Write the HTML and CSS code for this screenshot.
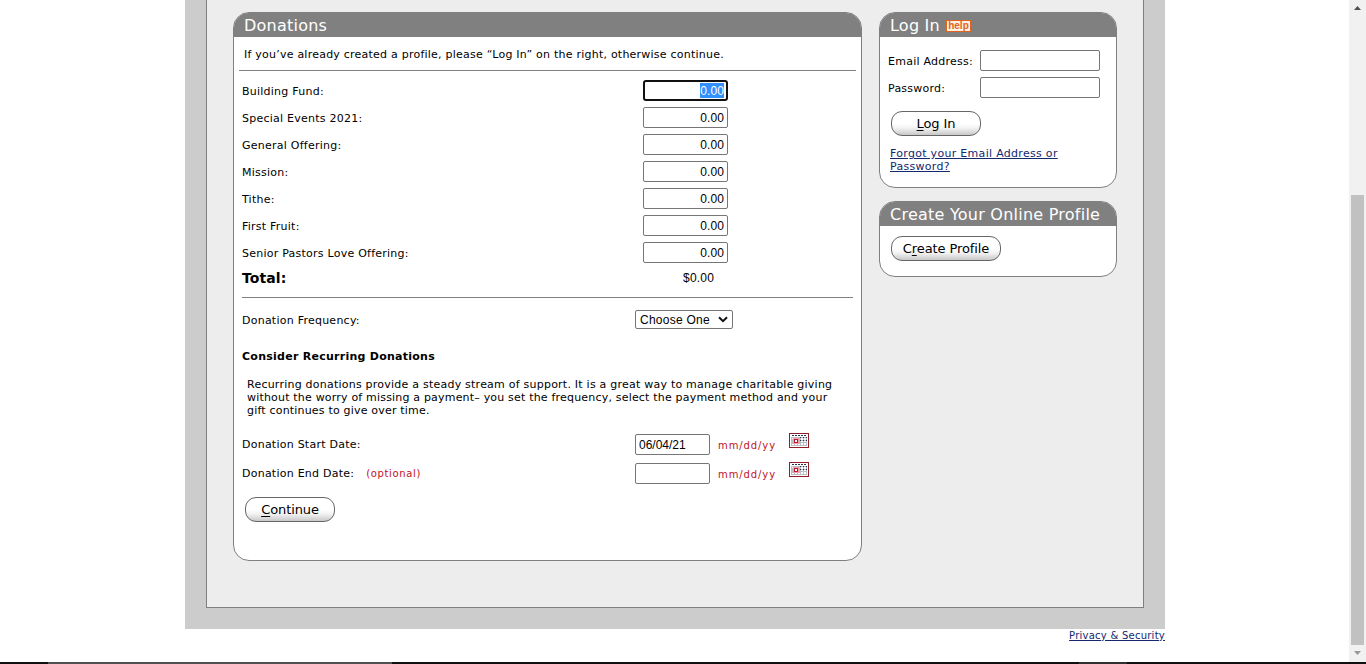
FILE: index.html
```html
<!DOCTYPE html>
<html lang="en">
<head>
<meta charset="utf-8">
<title>Donations</title>
<link rel="stylesheet" href="styles.css">
</head>
<body>
<div class="viewport">
  <div class="page">
    <div class="frame">
      <div class="content">
        <section class="card donations">
          <h2 class="card-title">Donations</h2>
          <p class="intro"><span>If you’ve already created a profile, please “Log In” on the right, otherwise continue.</span></p>
          <div class="funds">
            <div class="row"><label>Building Fund:</label><div class="field amount focused"><span class="selected">0.00</span></div></div>
            <div class="row"><label>Special Events 2021:</label><input class="field amount" value="0.00"></div>
            <div class="row"><label>General Offering:</label><input class="field amount" value="0.00"></div>
            <div class="row"><label>Mission:</label><input class="field amount" value="0.00"></div>
            <div class="row"><label>Tithe:</label><input class="field amount" value="0.00"></div>
            <div class="row"><label>First Fruit:</label><input class="field amount" value="0.00"></div>
            <div class="row"><label>Senior Pastors Love Offering:</label><input class="field amount" value="0.00"></div>
            <div class="row total"><strong>Total:</strong><span class="sum">$0.00</span></div>
          </div>
          <div class="row frequency"><label>Donation Frequency:</label>
            <div class="select"><span>Choose One</span><svg width="10" height="7" viewBox="0 0 10 7"><path d="M1 1.2 5 5.2 9 1.2" fill="none" stroke="#111" stroke-width="2"/></svg></div>
          </div>
          <h3 class="subhead"><span>Consider Recurring Donations</span></h3>
          <p class="blurb"><span>Recurring donations provide a steady stream of support. It is a great way to manage charitable giving</span><br><span class="tight">without the worry of missing a payment– you set the frequency, select the payment method and your</span><br><span class="tight">gift continues to give over time.</span></p>
          <div class="row date"><label>Donation Start Date:</label><input class="field day" value="06/04/21"><span class="hint">mm/dd/yy</span>
            <svg class="calendar" width="20" height="15" viewBox="0 0 20 15" shape-rendering="crispEdges"><use href="#cal"/></svg></div>
          <div class="row date"><label>Donation End Date:<span class="optional">(optional)</span></label><input class="field day"><span class="hint">mm/dd/yy</span>
            <svg class="calendar" width="20" height="15" viewBox="0 0 20 15" shape-rendering="crispEdges">
              <defs><g id="cal"><path fill="#921c28" d="M0 0h20v15H0z"/><path fill="#fff" d="M1 1h18v13H1z"/><path fill="#b9bdc4" d="M2 4h16v9H2z"/><path fill="#fff" d="M3 5h2v1H3zM12 5h2v2h-2zM15 5h2v2h-2zM12 8h2v1h-2zM15 8h2v1h-2zM12 10h2v2h-2zM15 10h2v2h-2zM3 11h2v1H3zM6 11h2v1H6zM9 11h2v1H9z"/><path fill="#26354f" d="M3 2h2v1H3zM6 2h2v1H6zM9 2h2v1H9zM12 2h2v1h-2zM15 2h2v1h-2zM11 4h1v1h-1zM14 4h1v1h-1zM17 4h1v1h-1zM11 7h1v1h-1zM14 7h1v1h-1zM17 7h1v1h-1z"/><path fill="#f3a0a8" d="M4 5h6v6H4z"/><path fill="#c4182a" d="M5 6h4v4H5z"/><path fill="#fff" d="M6 7h2v2H6z"/></g></defs>
              <use href="#cal"/></svg></div>
          <button class="pill continue"><span><u>C</u>ontinue</span></button>
        </section>
        <aside class="side">
          <section class="card login">
            <h2 class="card-title">Log In<span class="help">help</span></h2>
            <div class="cred"><label>Email Address:</label><input class="field"></div>
            <div class="cred"><label>Password:</label><input class="field"></div>
            <button class="pill enter"><span><u>L</u>og In</span></button>
            <a class="forgot">Forgot your Email Address or<br>Password?</a>
          </section>
          <section class="card profile">
            <h2 class="card-title">Create Your Online Profile</h2>
            <button class="pill create"><span>C<u>r</u>eate Profile</span></button>
          </section>
        </aside>
      </div>
    </div>
    <a class="privacy">Privacy &amp; Security</a>
  </div>
  <div class="scrollbar">
    <svg width="17" height="17" viewBox="0 0 17 17"><path fill="#505050" d="M5 10h7L8.500 6z"/></svg>
    <div class="thumb"></div>
    <svg width="17" height="17" viewBox="0 0 17 17"><path fill="#989898" d="M5 6h7l-3.500 4z"/></svg>
  </div>
</div>
<div class="taskbar"></div>
</body>
</html>
```
FILE: styles.css
```css
* { box-sizing: border-box; }
body { margin: 0; background: #fff; color: #000; overflow: hidden; font: 11px/13px Verdana, "DejaVu Sans", sans-serif; letter-spacing: .23px; }
h2, h3, p { margin: 0; }
.viewport { display: flex; height: 662px; }
.page { flex: 1; display: flex; flex-direction: column; align-items: flex-start; padding-left: 185px; }
.frame { width: 980px; height: 629px; padding: 0 21px 21px; background: #ccc; }
.content { display: flex; align-items: flex-start; gap: 17px; height: 608px; padding: 12px 26px 0; border: 1px solid #808080; border-top: 0; background: #ededed; }
.card { border: 1px solid #808080; border-radius: 16px; background: #fff; overflow: hidden; }
.card-title { height: 24px; padding-left: 10px; background: #808080; color: #fff; font-size: 16px; line-height: 26px; font-weight: 400; letter-spacing: .24px; white-space: nowrap; }
.donations { flex: none; width: 629px; height: 549px; }
.intro { height: 34px; margin: 0 5px; padding: 11px 0 0 5px; border-bottom: 1px solid #808080; white-space: nowrap; }
.funds { margin: 0 8px; padding-top: 6px; height: 227px; border-bottom: 1px solid #808080; }
.row { display: flex; align-items: center; height: 27px; white-space: nowrap; }
.row label, .cred label { letter-spacing: .24px; }
.funds label { width: 401px; padding-top: 1px; }
.field { width: 120px; height: 21px; padding: 1px 3px; border: 1px solid #767676; border-radius: 2px; background: #fff; color: #000; outline: 0; font: 12px "Liberation Sans", Arial, sans-serif; }
.amount { width: 85px; text-align: right; letter-spacing: .1px; }
.focused { border: 2px solid #101010; border-radius: 3px; padding: 1px 2px; }
.selected { display: inline-block; height: 15px; line-height: 16px; background: #3390ff; color: #fff; }
.total { height: 24px; }
.total strong { width: 441px; font-size: 14px; letter-spacing: .1px; }
.sum { font: 12px "Liberation Sans", Arial, sans-serif; }
.frequency { margin: 8px 8px 0; }
.frequency label { width: 393px; padding-top: 1px; }
.select { display: flex; align-items: center; justify-content: space-between; width: 98px; height: 19px; padding: 0 4px; border: 1px solid #767676; border-radius: 2px; font: 12px "Liberation Sans", Arial, sans-serif; letter-spacing: .25px; }
.subhead { margin: 17px 8px 0; font-size: 11px; line-height: 13px; letter-spacing: .26px; }
.blurb { margin: 15px 0 0 13px; white-space: nowrap; }
.tight { letter-spacing: .19px; }
.date { height: 29px; margin-left: 8px; }
.blurb + .date { margin-top: 13px; }
.date label { width: 393px; }
.day { width: 75px; }
.hint { width: 71px; margin: 2px 0 0 8px; color: #c1121f; font-size: 10px; letter-spacing: .9px; }
.optional { margin-left: 12px; color: #c1121f; font-size: 10px; letter-spacing: .65px; }
.calendar { margin-top: -8px; }
.pill { display: block; width: 90px; height: 25px; padding: 0; border: 1px solid #666; border-radius: 11px; background: linear-gradient(#fff 50%, #f2f2f2 70%, #c8c8c8); color: #000; font: 13px/22px Verdana, "DejaVu Sans", sans-serif; letter-spacing: -.1px; }
.pill u { text-underline-offset: 2px; }
.continue { margin: 9px 0 0 11px; }
.side { width: 238px; }
.login { height: 176px; }
.profile { height: 76px; margin-top: 13px; }
.help { display: inline-block; height: 12px; width: 25px; margin-left: 6px; border: 1px solid #e0641e; background: #fff0e4; color: #e0641e; text-align: center; vertical-align: 2px; font: bold 10px/10px "Liberation Sans", Arial, sans-serif; letter-spacing: 0; }
.cred { display: flex; align-items: center; height: 27px; margin-left: 8px; }
.card-title + .cred { margin-top: 10px; }
.cred label { width: 92px; padding-top: 1px; white-space: nowrap; }
.enter { margin: 10px 0 0 11px; }
.forgot { display: block; margin: 11px 0 0 10px; white-space: nowrap; letter-spacing: .3px; }
.forgot, .privacy { color: #14286e; text-decoration: underline; }
.create { width: 110px; margin: 10px 0 0 11px; }
.privacy { align-self: flex-end; margin: 0 184px 0 0; font-size: 10px; white-space: nowrap; letter-spacing: .25px; }
.scrollbar { display: flex; flex-direction: column; width: 17px; background: #f1f1f1; }
.thumb { width: 13px; height: 450px; margin: 178px 0 0 2px; background: #c1c1c1; }
.taskbar { height: 2px; background: linear-gradient(90deg, #101010 48px, #505050 48px 392px, #101010 392px 1079px, #303030 1079px 1127px, #101010 1127px); }
```
